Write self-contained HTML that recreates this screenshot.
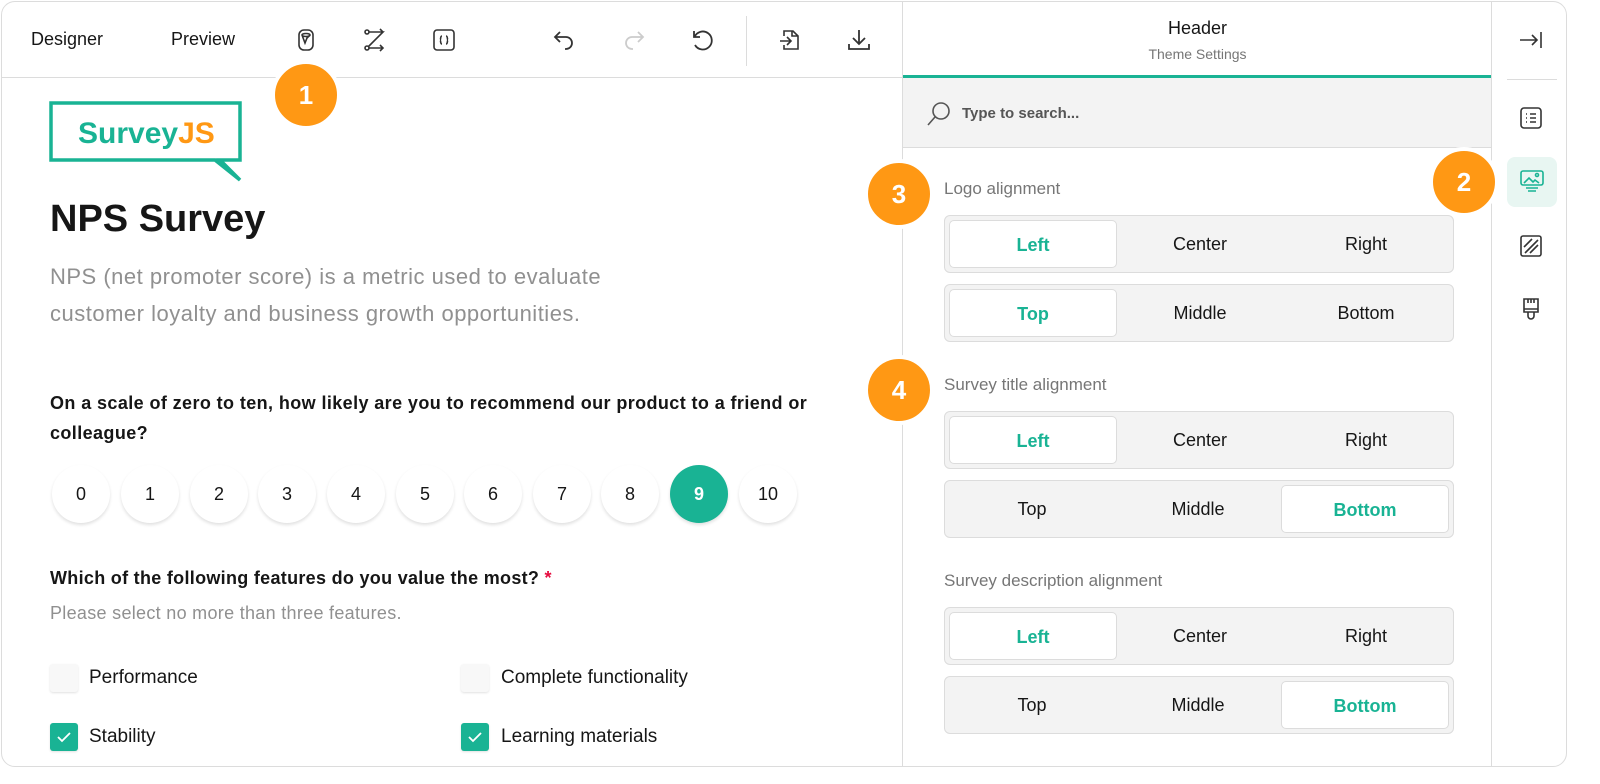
<!DOCTYPE html>
<html><head><meta charset="utf-8"><style>
*{box-sizing:border-box;margin:0;padding:0}
body{width:1600px;height:784px;background:#fff;font-family:"Liberation Sans",sans-serif;color:#161616;position:relative;overflow:hidden}
.frame{position:absolute;left:1px;top:1px;width:1566px;height:766px;border:1px solid #dcdcdc;border-radius:14px;overflow:hidden;background:#fff}
.abs{position:absolute}
.tb{font-size:18px;color:#161616}
.ico{position:absolute;width:24px;height:24px}
.hl{position:absolute;background:#dcdcdc}
.badge{position:absolute;width:70px;height:70px;border-radius:50%;background:#ff9814;border:4px solid #fff;color:#fff;font-size:26px;font-weight:bold;text-align:center;line-height:62px}
.lbl{position:absolute;left:942px;font-size:17px;color:#767676}
.grp{position:absolute;left:942px;width:510px;height:58px;background:#f3f3f3;border:1px solid #dcdcdc;border-radius:6px;display:flex;padding:4px;font-size:18px}
.grp div{flex:1;text-align:center;line-height:48px;border-radius:5px}
.grp .s{background:#fff;color:#19b394;font-weight:bold;border:1px solid #dcdcdc}
.rt{position:absolute;top:463px;width:58px;height:58px;border-radius:50%;background:#fff;box-shadow:0 2px 3px rgba(0,0,0,.12);text-align:center;line-height:58px;font-size:18px}
.cb{position:absolute;width:28px;height:28px;border-radius:3px;background:#f8f8f8;box-shadow:0 1px 2px rgba(0,0,0,.12)}
.cb.on{background:#19b394}
.ct{position:absolute;font-size:19px}
</style></head><body><div class="frame">
<!-- toolbar -->
<div class="abs tb" style="left:29px;top:27px">Designer</div>
<div class="abs tb" style="left:169px;top:27px">Preview</div>
<svg class="ico" style="left:292px;top:26px" viewBox="0 0 24 24" fill="none" stroke="#333" stroke-width="1.6"><rect x="5" y="2" width="14" height="20" rx="5"/><path d="M8 7c0-2 8-2 8 0s-8 2-8 0M8 7l3 8 2-5 3-3"/></svg>
<svg class="ico" style="left:361px;top:26px" viewBox="0 0 24 24" fill="none" stroke="#333" stroke-width="1.6"><circle cx="4" cy="4" r="2"/><circle cx="4" cy="20" r="2"/><path d="M6 4h14L5 19M6 20h14M17 17l3 3-3 3M17 1l3 3-3 3"/></svg>
<svg class="ico" style="left:430px;top:26px" viewBox="0 0 24 24" fill="none" stroke="#333" stroke-width="1.6"><rect x="2" y="2" width="20" height="20" rx="3"/><path d="M10 8c-2 0-1 4-2 4 1 0 0 4 2 4M14 8c2 0 1 4 2 4-1 0 0 4-2 4"/></svg>
<svg class="ico" style="left:550px;top:26px" viewBox="0 0 24 24" fill="none" stroke="#333" stroke-width="1.8"><path d="M8 4L3 9l5 5M3 9h11a6 6 0 0 1 0 12h-1"/></svg>
<svg class="ico" style="left:620px;top:26px" viewBox="0 0 24 24" fill="none" stroke="#ccc" stroke-width="1.8"><path d="M16 4l5 5-5 5M21 9H10a6 6 0 0 0 0 12h1"/></svg>
<svg class="ico" style="left:688px;top:26px" viewBox="0 0 24 24" fill="none" stroke="#333" stroke-width="1.8"><path d="M4 3v6h6M4.5 9A9 9 0 1 1 5 17"/></svg>
<div class="hl" style="left:744px;top:14px;width:1px;height:50px"></div>
<svg class="ico" style="left:776px;top:26px" viewBox="0 0 24 24" fill="none" stroke="#333" stroke-width="1.6"><path d="M6 8V3h9l5 5v13H6v-4M14 3v5h6M2 13h11M9 9l4 4-4 4"/></svg>
<svg class="ico" style="left:845px;top:26px" viewBox="0 0 24 24" fill="none" stroke="#333" stroke-width="1.8"><path d="M12 2v14M6 10l6 6 6-6M2 16v5h20v-5"/></svg>
<div class="hl" style="left:0;top:75px;width:901px;height:1px"></div>
<div class="hl" style="left:900px;top:0;width:1px;height:766px"></div>
<!-- left content -->
<svg class="abs" style="left:47px;top:99px" width="195" height="82" viewBox="0 0 195 82"><path d="M2 2h189v57h-20l20 20-25-20H2z" fill="none" stroke="#19b394" stroke-width="3.5"/><text x="29" y="42" font-family="Liberation Sans" font-weight="bold" font-size="30" fill="#19b394">Survey<tspan fill="#ff9814">JS</tspan></text></svg>
<div class="abs" style="left:48px;top:196px;font-size:38px;font-weight:bold">NPS Survey</div>
<div class="abs" style="left:48px;top:256px;font-size:22px;line-height:37px;color:#909090;width:625px;letter-spacing:0.5px">NPS (net promoter score) is a metric used to evaluate customer loyalty and business growth opportunities.</div>
<div class="abs" style="left:48px;top:386px;font-size:18px;line-height:30px;font-weight:bold;width:820px;letter-spacing:0.4px">On a scale of zero to ten, how likely are you to recommend our product to a friend or colleague?</div>
<div class="rt" style="left:50px">0</div><div class="rt" style="left:119px">1</div><div class="rt" style="left:188px">2</div><div class="rt" style="left:256px">3</div><div class="rt" style="left:325px">4</div><div class="rt" style="left:394px">5</div><div class="rt" style="left:462px">6</div><div class="rt" style="left:531px">7</div><div class="rt" style="left:599px">8</div><div class="rt" style="left:668px;background:#19b394;color:#fff;font-weight:bold">9</div><div class="rt" style="left:737px">10</div>
<div class="abs" style="left:48px;top:566px;font-size:18px;font-weight:bold;letter-spacing:0.3px">Which of the following features do you value the most? <span style="color:#e60a3e">*</span></div>
<div class="abs" style="left:48px;top:601px;font-size:18px;color:#909090;letter-spacing:0.3px">Please select no more than three features.</div>
<div class="cb" style="left:48px;top:662px"></div><div class="ct" style="left:87px;top:665px">Performance</div>
<div class="cb" style="left:459px;top:662px"></div><div class="ct" style="left:499px;top:665px">Complete functionality</div>
<div class="cb on" style="left:48px;top:721px"><svg width="28" height="28" viewBox="0 0 28 28"><path d="M8 14l4 4 8-8" fill="none" stroke="#fff" stroke-width="1.8"/></svg></div><div class="ct" style="left:87px;top:724px">Stability</div>
<div class="cb on" style="left:459px;top:721px"><svg width="28" height="28" viewBox="0 0 28 28"><path d="M8 14l4 4 8-8" fill="none" stroke="#fff" stroke-width="1.8"/></svg></div><div class="ct" style="left:499px;top:724px">Learning materials</div>
<!-- right panel -->
<div class="abs" style="left:901px;top:16px;width:589px;text-align:center;font-size:18px">Header</div>
<div class="abs" style="left:901px;top:44px;width:589px;text-align:center;font-size:14px;color:#767676">Theme Settings</div>
<div class="abs" style="left:901px;top:73px;width:589px;height:3px;background:#19b394"></div>
<div class="abs" style="left:901px;top:76px;width:589px;height:70px;background:#f3f3f3;border-bottom:1px solid #dcdcdc"></div>
<svg class="abs" style="left:924px;top:99px" width="26" height="26" viewBox="0 0 26 26" fill="none" stroke="#555" stroke-width="1.6"><circle cx="15" cy="10" r="8"/><path d="M9 16l-7 8"/></svg>
<div class="abs" style="left:960px;top:103px;font-size:15px;font-weight:bold;color:#555">Type to search...</div>
<div class="lbl" style="top:177px">Logo alignment</div>
<div class="grp" style="top:213px"><div class="s">Left</div><div>Center</div><div>Right</div></div>
<div class="grp" style="top:282px"><div class="s">Top</div><div>Middle</div><div>Bottom</div></div>
<div class="lbl" style="top:373px">Survey title alignment</div>
<div class="grp" style="top:409px"><div class="s">Left</div><div>Center</div><div>Right</div></div>
<div class="grp" style="top:478px"><div>Top</div><div>Middle</div><div class="s">Bottom</div></div>
<div class="lbl" style="top:569px">Survey description alignment</div>
<div class="grp" style="top:605px"><div class="s">Left</div><div>Center</div><div>Right</div></div>
<div class="grp" style="top:674px"><div>Top</div><div>Middle</div><div class="s">Bottom</div></div>
<!-- sidebar -->
<div class="hl" style="left:1489px;top:0;width:1px;height:766px"></div>
<svg class="ico" style="left:1517px;top:26px" viewBox="0 0 24 24" fill="none" stroke="#333" stroke-width="1.6"><path d="M1 12h17M13 7l5 5-5 5M22 4v16"/></svg>
<div class="hl" style="left:1505px;top:77px;width:50px;height:1px"></div>
<svg class="ico" style="left:1517px;top:104px" viewBox="0 0 24 24" fill="none" stroke="#333" stroke-width="1.6"><rect x="2" y="2" width="20" height="20" rx="3"/><path d="M7 8h1M11 8h6M7 12h1M11 12h6M7 16h1M11 16h6"/></svg>
<div class="abs" style="left:1505px;top:155px;width:50px;height:50px;border-radius:8px;background:#e8f6f2"></div>
<svg class="ico" style="left:1518px;top:167px" viewBox="0 0 24 24" fill="none" stroke="#19b394" stroke-width="1.6"><rect x="1" y="2" width="22" height="14" rx="2"/><path d="M4 14l5-5 4 4 2-2 4 3M6 19h12M8 22h8"/><circle cx="17" cy="6" r="1.5"/></svg>
<svg class="ico" style="left:1517px;top:232px" viewBox="0 0 24 24" fill="none" stroke="#333" stroke-width="1.6"><rect x="2" y="2" width="20" height="20" rx="2"/><path d="M5 13l8-8M6 19L19 6M11 19l8-8"/></svg>
<svg class="ico" style="left:1517px;top:295px" viewBox="0 0 24 24" fill="none" stroke="#333" stroke-width="1.6"><path d="M5 2h14v10H5zM5 12v3h14v-3M9 15v4a3 3 0 0 0 6 0v-4M9 2v4M12 2v4M15 2v4"/></svg>
<!-- badges -->
<div class="badge" style="left:269px;top:58px">1</div>
<div class="badge" style="left:1427px;top:145px">2</div>
<div class="badge" style="left:862px;top:157px">3</div>
<div class="badge" style="left:862px;top:353px">4</div>
</div></body></html>
